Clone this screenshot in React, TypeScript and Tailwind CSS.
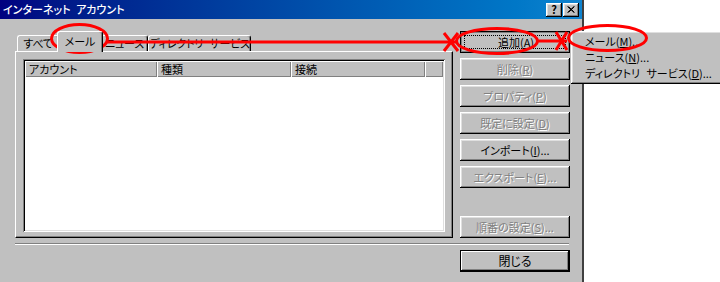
import type { ReactNode } from "react";

const raised =
  "shadow-[inset_-1px_-1px_0_#000,inset_1px_1px_0_#fff,inset_-2px_-2px_0_#808080,inset_2px_2px_0_#dfdfdf]";
const disabledText = "text-[#808080] [text-shadow:1px_1px_0_#fff]";

function Button({ children, disabled }: { children: ReactNode; disabled?: boolean }) {
  return (
    <div
      className={`flex h-[22px] w-[110px] items-center justify-center whitespace-nowrap bg-[#c0c0c0] ${raised} ${
        disabled ? disabledText : "text-black"
      }`}
    >
      {children}
    </div>
  );
}

function Tab({ label, width, selected }: { label: string; width: string; selected?: boolean }) {
  if (selected) {
    return (
      <div
        className={`relative z-10 -mx-[2px] -mb-[1px] flex h-[21px] ${width} items-start justify-center whitespace-nowrap rounded-t-[3px] border-l border-t border-white bg-[#c0c0c0] pt-[4px] shadow-[inset_-1px_0_0_#808080] border-r border-r-black`}
      >
        {label}
      </div>
    );
  }
  return (
    <div
      className={`flex h-[16px] ${width} items-center justify-center whitespace-nowrap rounded-t-[3px] border-l border-t border-white bg-[#c0c0c0] tracking-[-0.2px] [word-spacing:4px] shadow-[inset_-1px_0_0_#808080] border-r border-r-black`}
    >
      {label}
    </div>
  );
}

function HeaderCell({ label, width }: { label?: string; width: string }) {
  return (
    <div
      className={`flex h-full ${width} items-center pl-[4px] shadow-[inset_1px_1px_0_#fff,inset_-1px_-1px_0_#808080]`}
    >
      {label}
    </div>
  );
}

export default function App() {
  return (
    <div className="relative h-[282px] w-[720px] overflow-hidden bg-white text-[11px] leading-none text-black [font-family:'Noto_Sans_CJK_JP','Noto_Sans_CJK_SC',sans-serif] [font-feature-settings:'palt']">
      {/* dialog window */}
      <div className="flex h-[300px] w-[584px] flex-col border-r-2 border-r-[#404040] bg-[#c0c0c0]">
        <div className="flex h-[19px] items-center justify-between bg-linear-to-r from-[#000080] to-[#1084d0] pl-[3px] pr-[3px]">
          <span className="font-medium text-white [word-spacing:3px]">インターネット アカウント</span>
          <div className="flex gap-[1px]">
            <div className={`flex h-[14px] w-[16px] items-center justify-center bg-[#c0c0c0] text-[11px] font-bold ${raised}`}>
              ?
            </div>
            <div className={`flex h-[14px] w-[16px] items-center justify-center bg-[#c0c0c0] ${raised}`}>
              <svg width="8" height="7" viewBox="0 0 8 7">
                <path d="M0.5 0.5 L7 6.5 M1.5 0.5 L7.5 6.5 M7 0.5 L0.5 6.5 M7.5 0.5 L1.5 6.5" stroke="#000" strokeWidth="1" />
              </svg>
            </div>
          </div>
        </div>

        <div className="flex flex-col pl-[15px] pt-[12px]">
          <div className="flex">
            {/* tabs + panel */}
            <div className="flex w-[438px] flex-col">
              <div className="flex h-[20px] items-end pl-[2px]">
                <Tab label="すべて" width="w-[42px]" />
                <Tab label="メール" width="w-[46px]" selected />
                <Tab label="ニュース" width="w-[47px]" />
                <Tab label="ディレクトリ サービス" width="w-[103px]" />
              </div>
              <div className="flex h-[187px] flex-col border border-b-black border-l-white border-r-black border-t-white px-[7px] pb-[5px] pt-[7px] shadow-[inset_-1px_-1px_0_#808080]">
                <div className="flex flex-1 flex-col bg-white p-[2px] shadow-[inset_1px_1px_0_#808080,inset_-1px_-1px_0_#fff,inset_2px_2px_0_#000,inset_-2px_-2px_0_#dfdfdf]">
                  <div className="flex h-[16px] bg-[#c0c0c0]">
                    <HeaderCell label="アカウント" width="w-[132px]" />
                    <HeaderCell label="種類" width="w-[134px]" />
                    <HeaderCell label="接続" width="w-[134px]" />
                    <HeaderCell width="flex-1" />
                  </div>
                  <div className="flex-1" />
                </div>
              </div>
            </div>

            {/* buttons */}
            <div className="ml-[7px] flex w-[110px] flex-col gap-[5px]">
              <div className="flex h-[22px] w-[110px] border border-black bg-[#c0c0c0] p-[3px] shadow-[inset_1px_1px_0_#808080,inset_-1px_-1px_0_#808080]">
                <div className="flex flex-1 items-center justify-center border border-dotted border-black pl-[2px] pt-[1px]">
                  追加(<u>A</u>)
                </div>
              </div>
              <Button disabled>
                削除(<u>R</u>)
              </Button>
              <Button disabled>
                プロパティ(<u>P</u>)
              </Button>
              <Button disabled>
                既定に設定(<u>D</u>)
              </Button>
              <Button>
                インポート(<u>I</u>)...
              </Button>
              <Button disabled>
                エクスポート(<u>E</u>)...
              </Button>
              <div className="mt-auto">
                <Button disabled>
                  順番の設定(<u>S</u>)...
                </Button>
              </div>
            </div>
          </div>

          <div className="mt-[5px] h-[2px] w-[554px] border-t border-b border-t-[#808080] border-b-white" />

          <div className="mt-[5px] flex w-[555px] justify-end">
            <div className="flex h-[22px] w-[110px] border border-black">
              <div className="flex flex-1 items-center justify-center bg-[#c0c0c0] text-[12px] shadow-[inset_-1px_-1px_0_#000,inset_1px_1px_0_#fff,inset_-2px_-2px_0_#808080]">
                閉じる
              </div>
            </div>
          </div>
        </div>
      </div>

      {/* popup menu */}
      <div className={`absolute left-[571px] top-[31px] flex h-[53px] w-[160px] flex-col whitespace-nowrap bg-[#c0c0c0] px-[3px] py-[2px] [word-spacing:4px] ${raised}`}>
        <div className="flex h-[16px] items-center pl-[11px]">
          メール(<u>M</u>)...
        </div>
        <div className="flex h-[16px] items-center pl-[11px]">
          ニュース(<u>N</u>)...
        </div>
        <div className="flex h-[16px] items-center pl-[11px]">
          ディレクトリ サービス(<u>D</u>)...
        </div>
      </div>

      {/* red annotations */}
      <svg className="pointer-events-none absolute left-0 top-0" width="720" height="282" viewBox="0 0 720 282">
        <g fill="none" stroke="#ff0000" strokeWidth="3">
          <ellipse cx="79.5" cy="38.5" rx="28" ry="14" />
          <ellipse cx="497" cy="41" rx="40.5" ry="12.5" />
          <ellipse cx="607.5" cy="38" rx="39" ry="12.5" />
          <path d="M107 42 L456 42" />
          <path d="M444 33 L458 51 M444 51 L458 33" />
          <path d="M538 41 L567 41" />
          <path d="M556 32 L567 50 M556 50 L567 32" />
        </g>
      </svg>
    </div>
  );
}
